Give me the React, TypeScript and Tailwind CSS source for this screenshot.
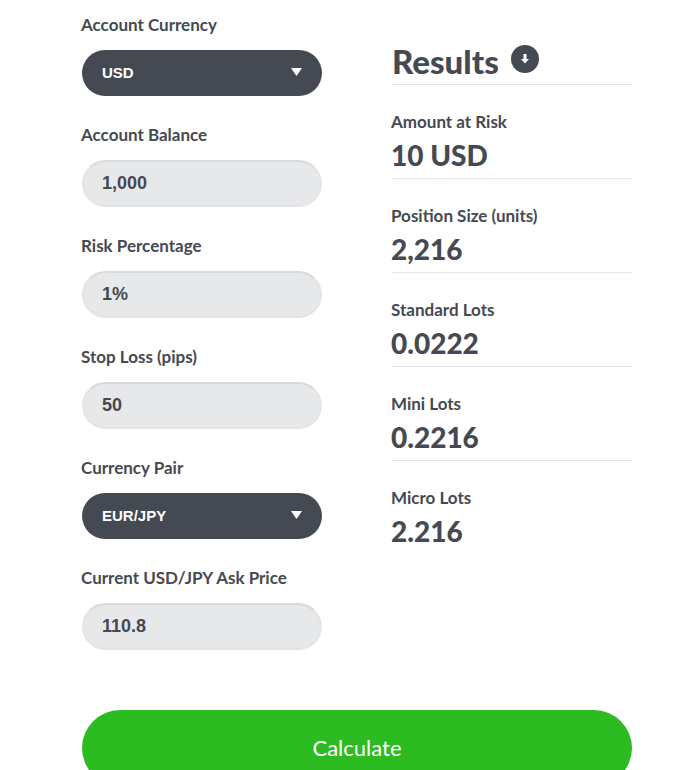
import React from "react";

const font = { fontFamily: '"Lato", "Liberation Sans", sans-serif' };

function Label({ children }: { children: React.ReactNode }) {
  return <div className="-ml-px h-[20px] text-[17px] leading-[20px] font-bold text-[#454952]">{children}</div>;
}

function SelectField({ label, value, mt }: { label: string; value: string; mt: string }) {
  return (
    <div className={mt}>
      <Label>{label}</Label>
      <div className="mt-[15px] flex h-[46px] items-center justify-between rounded-[23px] bg-[#454952] pl-[20px] pr-[20px]">
        <span className="font-['Liberation_Sans',sans-serif] text-[15px] font-bold text-white">{value}</span>
        <svg width="11" height="8" viewBox="0 0 11 8" className="-mt-[3px]">
          <path d="M0 0H11L5.5 8Z" fill="#fff" />
        </svg>
      </div>
    </div>
  );
}

function InputField({ label, value, mt }: { label: string; value: string; mt: string }) {
  return (
    <div className={mt}>
      <Label>{label}</Label>
      <div className="mt-[15px] flex h-[47px] items-center rounded-[23.5px] border-2 border-[#e3e4e6] border-t-[#d9dadc] bg-[#e7e8ea] pl-[18px]">
        <span className="font-['Liberation_Sans',sans-serif] text-[18px] font-bold text-[#454952]">{value}</span>
      </div>
    </div>
  );
}

function Result({ label, value, last }: { label: string; value: string; last?: boolean }) {
  return (
    <div className={`h-[94px] pt-[27px] ${last ? "" : "border-b border-[#e4e5ee]"}`}>
      <div className="-ml-px h-[20px] text-[17px] leading-[20px] font-bold text-[#454952]">{label}</div>
      <div className="mt-[5px] -ml-px h-[36px] text-[28px] leading-[36px] font-black text-[#454952]">{value}</div>
    </div>
  );
}

export default function App() {
  return (
    <div className="h-[770px] w-[699px] overflow-hidden bg-white pl-[82px]" style={font}>
      <div className="flex w-[550px] justify-between pt-[15px]">
        <div className="w-[240px]">
          <SelectField label="Account Currency" value="USD" mt="" />
          <InputField label="Account Balance" value="1,000" mt="mt-[29px]" />
          <InputField label="Risk Percentage" value="1%" mt="mt-[29px]" />
          <InputField label="Stop Loss (pips)" value="50" mt="mt-[29px]" />
          <SelectField label="Currency Pair" value="EUR/JPY" mt="mt-[29px]" />
          <InputField label="Current USD/JPY Ask Price" value="110.8" mt="mt-[29px]" />
        </div>
        <div className="w-[240px]">
          <div className="mt-[23px] flex h-[47px] items-start gap-[12px] border-b border-[#e4e5ee]">
            <span className="text-[33px] leading-[46px] font-black text-[#454952]">Results</span>
            <svg width="28" height="28" viewBox="0 0 28 28" className="mt-[7px]">
              <circle cx="14" cy="14" r="14" fill="#454952" />
              <path d="M12.5 9h3v5h2.5L14 18.5 10 14h2.5Z" fill="#fff" />
            </svg>
          </div>
          <Result label="Amount at Risk" value="10 USD" />
          <Result label="Position Size (units)" value="2,216" />
          <Result label="Standard Lots" value="0.0222" />
          <Result label="Mini Lots" value="0.2216" />
          <Result label="Micro Lots" value="2.216" last />
        </div>
      </div>
      <button className="mt-[60px] block h-[76px] w-[550px] rounded-[38px] bg-[#2cbc22] pb-[2px] text-center text-[22px] text-white">
        Calculate
      </button>
    </div>
  );
}
